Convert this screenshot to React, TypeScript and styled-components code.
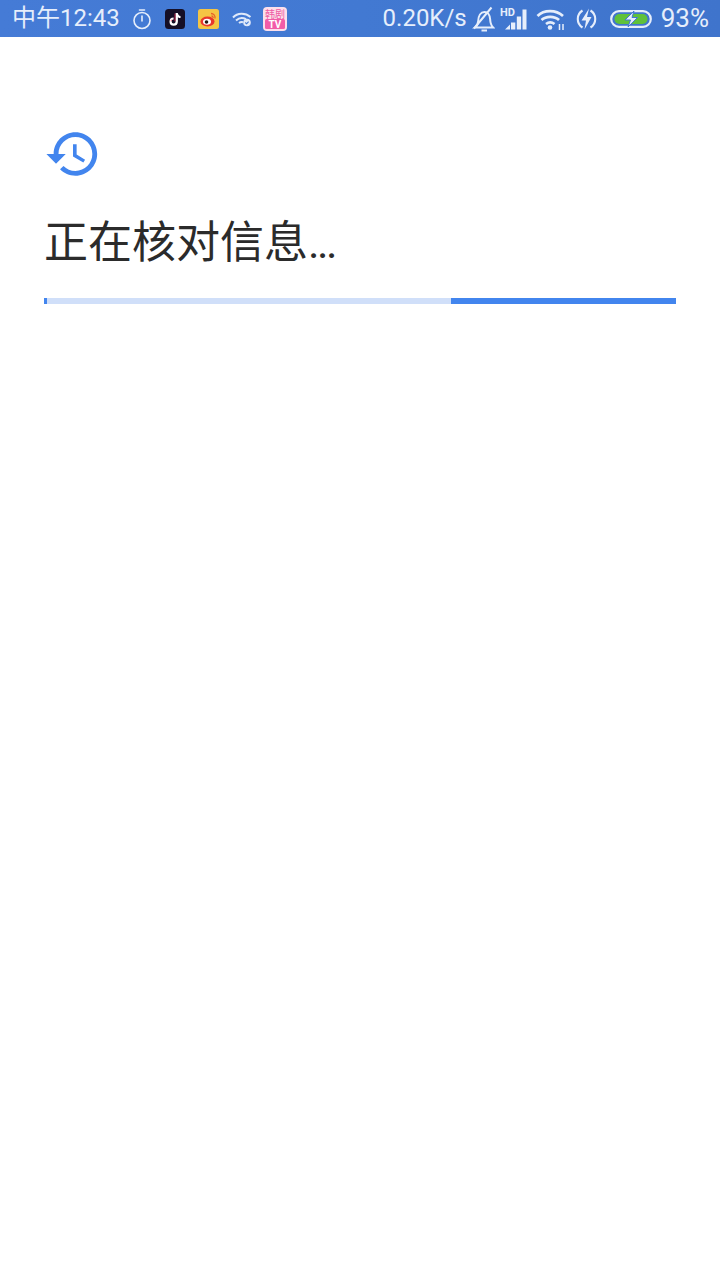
import React from 'react'
import styled, { createGlobalStyle } from 'styled-components'

const GlobalStyle = createGlobalStyle`
    html, body {
        margin: 0;
        padding: 0;
        background: #fff;
    }
`

const Page = styled.div`
    width: 720px;
    height: 1280px;
    background: #fff;
    overflow: hidden;
    font-family: Roboto, 'Noto Sans CJK SC', sans-serif;
`

const StatusBar = styled.div`
    height: 37px;
    box-sizing: border-box;
    padding: 0 11px 0 12px;
    display: flex;
    align-items: center;
    justify-content: space-between;
    background: linear-gradient(90deg, #457bd6 0%, #4279d2 50%, #3f74cc 100%);
    color: #e6eefb;
`

const Group = styled.div`
    display: flex;
    align-items: center;
`

const BarText = styled.span<{ $right?: number; $size?: number }>`
    font-size: ${p => p.$size ?? 24}px;
    line-height: 37px;
    white-space: nowrap;
    margin-right: ${p => p.$right ?? 0}px;
`

const Glyph = styled.svg<{ $right?: number }>`
    display: block;
    flex: none;
    margin-right: ${p => p.$right ?? 0}px;
`

const Content = styled.main`
    padding: 88px 44px 0;
`

const Title = styled.h1`
    margin: 15px 0 0;
    font-size: 44px;
    line-height: 90px;
    font-weight: 400;
    color: #2b2b2b;
    white-space: nowrap;
`

const Dots = styled.span`
    letter-spacing: -2.6px;
`

const Progress = styled.div`
    margin-top: 10px;
    height: 6px;
    display: flex;
    background: #4285ee;
`

const Track = styled.div`
    width: 404px;
    margin-left: 3px;
    background: #d0dff9;
`

function StatusIcons() {
    return (
        <Group>
            <Glyph $right={13} width="20" height="22" viewBox="0 0 20 22" fill="none" stroke="#e6eefb" strokeWidth="1.6">
                <circle cx="10" cy="12.5" r="8" />
                <path d="M7.5 2h5M10 8v5" strokeLinecap="round" />
            </Glyph>
            <Glyph $right={13} width="20" height="20" viewBox="0 0 20 20">
                <rect width="20" height="20" rx="3.5" fill="#150f26" />
                <path d="M10.6 4v8.6a2 2 0 1 1-2-2V8.400a4.200 4.200 0 1 0 4.300 4.200V8.200c.8.6 1.700.9 2.600.9V6.900c-1.500-.1-2.500-1.300-2.700-2.900z" fill="#fff" />
                <path d="M10 4.500v7.800M7.300 10.500a2.500 2.500 0 0 0-1.400 1.700" stroke="#ff2f56" strokeWidth=".7" fill="none" />
            </Glyph>
            <Glyph $right={13} width="21" height="20" viewBox="0 0 21 20">
                <rect width="21" height="20" rx="2.500" fill="#f5c544" />
                <ellipse cx="9.500" cy="12.500" rx="7" ry="5" fill="#e8372c" />
                <ellipse cx="9" cy="12.800" rx="4" ry="3" fill="#fff" />
                <circle cx="8.500" cy="13" r="1.800" fill="#2a1a12" />
                <path d="M13 4.500c2.500 0 4.500 2 4 5M13.500 7c1 0 1.800.8 1.600 2" stroke="#e8622c" strokeWidth="1.300" fill="none" />
            </Glyph>
            <Glyph $right={11} width="20" height="16" viewBox="0 0 20 16" fill="none" stroke="#dfe9fa" strokeWidth="2">
                <path d="M1 6.500C5.500 1.800 13 1.500 18.500 6M4 9.500c3-2.800 7-3 10-1.300M7 12c1.300-1 2.800-1.200 4-.8" />
                <circle cx="15" cy="11.500" r="3.800" fill="#dfe9fa" stroke="none" />
                <path d="M13.300 11.500l1.300 1.300 2-2.200" stroke="#4279d2" strokeWidth="1.100" />
            </Glyph>
            <Glyph width="24" height="24" viewBox="0 0 24 24">
                <rect width="24" height="24" rx="4" fill="#fbdfeb" />
                <text x="12" y="10.500" textAnchor="middle" fontSize="10" fill="#ee5aa2" fontFamily="'Noto Sans CJK SC', sans-serif">韩剧</text>
                <rect x="2" y="12" width="20" height="10" rx="1.500" fill="#f25ca8" />
                <text x="12" y="20.500" textAnchor="middle" fontSize="10" fontWeight="700" fill="#fff" fontFamily="Roboto, sans-serif">TV</text>
            </Glyph>
        </Group>
    )
}

function SystemIcons() {
    return (
        <Group>
            <Glyph $right={5} width="23" height="26" viewBox="0 0 23 26" fill="none" stroke="#e6eefb" strokeWidth="2">
                <path d="M3 21.500c2-1.500 3-3.500 3.200-6.500.2-5 2.500-9 6.300-9 3.300 0 5.400 3 5.600 7 .2 3.500 1 6.500 3 8.500z" />
                <path d="M9.500 24.500h5.500M19.500 1.500L2 22.500" />
            </Glyph>
            <Glyph $right={9} width="27" height="24" viewBox="0 0 27 24" fill="#e6eefb">
                <text x="0" y="8.500" fontSize="11" fontWeight="700" fontFamily="Roboto, sans-serif">HD</text>
                <path d="M5 22.500l5-5v5zM11 15.500h4.300v7H11zM16.800 9.500h4.300v13h-4.300zM22.500 2.500H26.500v20h-4z" />
            </Glyph>
            <Glyph $right={9} width="30" height="22" viewBox="0 0 30 22" fill="none" stroke="#e6eefb" strokeWidth="2.700">
                <path d="M1.500 8C8 1.500 20 1.500 27 8M5.500 12c4.500-4.300 13-4.300 17.500 0M10 16c2.500-2 6-2 8.500 0" />
                <circle cx="14" cy="19.500" r="2.300" fill="#e6eefb" stroke="none" />
                <path d="M23.500 16v6M27 16v6" strokeWidth="1.500" />
            </Glyph>
            <Glyph $right={12} width="23" height="24" viewBox="0 0 23 24" fill="none" stroke="#e6eefb" strokeWidth="2.100">
                <path d="M7.500 3.500a10 10 0 0 0 0 17M15.500 3.500a10 10 0 0 1 0 17" />
                <path d="M14 1.500L6.500 13.500h4.500l-1.500 9L16.500 10H12z" fill="#e6eefb" stroke="none" />
            </Glyph>
            <Glyph $right={9} width="42" height="18" viewBox="0 0 42 18">
                <rect x="1.200" y="1.200" width="39.600" height="15.600" rx="7.800" fill="none" stroke="#e6eefb" strokeWidth="2.200" />
                <rect x="4.500" y="4" width="33" height="10" rx="5" fill="#5fc13a" />
                <path d="M24 1L15 10h5.500l-2.500 7 9.500-9.500H22z" fill="#e6eefb" stroke="#4279d2" strokeWidth="1" />
            </Glyph>
        </Group>
    )
}

export default function App() {
    return (
        <Page>
            <GlobalStyle />
            <StatusBar>
                <Group>
                    <BarText $right={12}>中午12:43</BarText>
                    <StatusIcons />
                </Group>
                <Group>
                    <BarText $right={5}>0.20K/s</BarText>
                    <SystemIcons />
                    <BarText $size={26}>93%</BarText>
                </Group>
            </StatusBar>
            <Content>
                <Glyph width="58" height="58" viewBox="0 0 24 24" fill="#4285ee">
                    <path d="M13 3c-4.970 0-9 4.030-9 9H1l3.890 3.890.07.140L9 12H6c0-3.870 3.130-7 7-7s7 3.130 7 7-3.130 7-7 7c-1.930 0-3.680-.79-4.940-2.060l-1.420 1.420C8.270 19.990 10.510 21 13 21c4.970 0 9-4.030 9-9s-4.030-9-9-9zm-1 5v5l4.280 2.540.72-1.210-3.500-2.080V8H12z" />
                </Glyph>
                <Title>正在核对信息<Dots>...</Dots></Title>
                <Progress>
                    <Track />
                </Progress>
            </Content>
        </Page>
    )
}
